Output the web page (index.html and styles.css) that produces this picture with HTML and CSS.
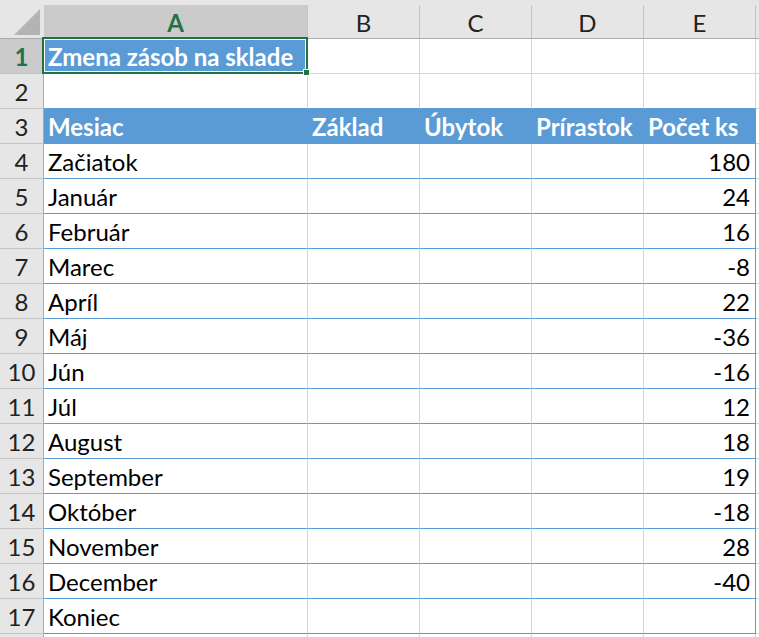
FILE: index.html
```html
<!DOCTYPE html>
<html lang="sk">
<head>
<meta charset="utf-8">
<title>Zmena zásob na sklade</title>
<link rel="stylesheet" href="styles.css">
</head>
<body>
<div class="sheet">
  <div class="corner">
    <svg width="44" height="39" viewBox="0 0 44 39"><polygon points="40,9 40,35 14,35" fill="#b3b3b3"/></svg>
  </div>
  <div class="band"></div>

  <div class="ch sel">A</div>
  <div class="ch">B</div>
  <div class="ch">C</div>
  <div class="ch">D</div>
  <div class="ch">E</div>
  <div class="ch end"></div>

  <!-- row 1 -->
  <div class="rh sel">1</div>
  <div class="c title">Zmena zásob na sklade</div>
  <div class="c"></div><div class="c"></div><div class="c"></div><div class="c"></div><div class="c end"></div>

  <!-- row 2 -->
  <div class="rh">2</div>
  <div class="c tb"></div><div class="c tb"></div><div class="c tb"></div><div class="c tb"></div><div class="c tb"></div><div class="c end"></div>

  <!-- row 3 -->
  <div class="rh">3</div>
  <div class="c th">Mesiac</div>
  <div class="c th">Základ</div>
  <div class="c th">Úbytok</div>
  <div class="c th">Prírastok</div>
  <div class="c th last">Počet ks</div>
  <div class="c end"></div>

  <div class="rh">4</div>
  <div class="c td">Začiatok</div><div class="c td"></div><div class="c td"></div><div class="c td"></div><div class="c td num last">180</div><div class="c end"></div>
  <div class="rh">5</div>
  <div class="c td">Január</div><div class="c td"></div><div class="c td"></div><div class="c td"></div><div class="c td num last">24</div><div class="c end"></div>
  <div class="rh">6</div>
  <div class="c td">Február</div><div class="c td"></div><div class="c td"></div><div class="c td"></div><div class="c td num last">16</div><div class="c end"></div>
  <div class="rh">7</div>
  <div class="c td">Marec</div><div class="c td"></div><div class="c td"></div><div class="c td"></div><div class="c td num last">-8</div><div class="c end"></div>
  <div class="rh">8</div>
  <div class="c td">Apríl</div><div class="c td"></div><div class="c td"></div><div class="c td"></div><div class="c td num last">22</div><div class="c end"></div>
  <div class="rh">9</div>
  <div class="c td">Máj</div><div class="c td"></div><div class="c td"></div><div class="c td"></div><div class="c td num last">-36</div><div class="c end"></div>
  <div class="rh">10</div>
  <div class="c td">Jún</div><div class="c td"></div><div class="c td"></div><div class="c td"></div><div class="c td num last">-16</div><div class="c end"></div>
  <div class="rh">11</div>
  <div class="c td">Júl</div><div class="c td"></div><div class="c td"></div><div class="c td"></div><div class="c td num last">12</div><div class="c end"></div>
  <div class="rh">12</div>
  <div class="c td">August</div><div class="c td"></div><div class="c td"></div><div class="c td"></div><div class="c td num last">18</div><div class="c end"></div>
  <div class="rh">13</div>
  <div class="c td">September</div><div class="c td"></div><div class="c td"></div><div class="c td"></div><div class="c td num last">19</div><div class="c end"></div>
  <div class="rh">14</div>
  <div class="c td">Október</div><div class="c td"></div><div class="c td"></div><div class="c td"></div><div class="c td num last">-18</div><div class="c end"></div>
  <div class="rh">15</div>
  <div class="c td">November</div><div class="c td"></div><div class="c td"></div><div class="c td"></div><div class="c td num last">28</div><div class="c end"></div>
  <div class="rh">16</div>
  <div class="c td">December</div><div class="c td"></div><div class="c td"></div><div class="c td"></div><div class="c td num last">-40</div><div class="c end"></div>
  <div class="rh">17</div>
  <div class="c td">Koniec</div><div class="c td"></div><div class="c td"></div><div class="c td"></div><div class="c td num last"></div><div class="c end"></div>

  <div class="rh"></div>
  <div class="c"></div><div class="c"></div><div class="c"></div><div class="c"></div><div class="c"></div><div class="c end"></div>

  <div class="selection"><span class="handle"></span></div>
</div>
</body>
</html>
```

FILE: styles.css
```css
* { box-sizing: border-box; }
html, body { margin: 0; padding: 0; background: #ffffff; overflow: hidden; }

.sheet {
  position: relative;
  display: grid;
  grid-template-columns: 44px 264px 112px 112px 112px 112px 3px;
  grid-template-rows: 5px 34px repeat(18, 35px);
  width: 759px;
  height: 637px;
  overflow: hidden;
  font-family: "Lato", "Liberation Sans", sans-serif;
  font-size: 24px;
  color: #000;
}

.corner {
  grid-row: 1 / span 2;
  grid-column: 1;
  background: #e6e6e6;
  border-bottom: 1px solid #ababab;
}
.corner svg { display: block; }

.band {
  grid-row: 1;
  grid-column: 2 / span 6;
  background: #e6e6e6;
}

.ch {
  background: #e6e6e6;
  border-right: 1px solid #c4c4c4;
  border-bottom: 1px solid #ababab;
  display: flex;
  align-items: center;
  justify-content: center;
  padding-top: 1px;
  color: #222;
}
.ch.end { border-right: 0; }
.ch.sel { background: #cbcbcb; color: #217346; font-weight: 700; }

.rh {
  background: #e6e6e6;
  border-right: 1px solid #ababab;
  border-bottom: 1px solid #c4c4c4;
  display: flex;
  align-items: center;
  justify-content: center;
  padding-top: 1px;
  color: #222;
}
.rh.sel { background: #cbcbcb; color: #217346; font-weight: 700; }

.c {
  border-right: 1px solid #d4d4d4;
  border-bottom: 1px solid #d4d4d4;
  display: flex;
  align-items: center;
  padding: 1px 5px 0 4px;
  white-space: nowrap;
}
.c.end { border-right: 0; }

.title {
  background: #5b9bd5;
  color: #fff;
  font-weight: 700;
}

.tb { border-bottom-color: #5b9bd5; }

.th {
  background: #5b9bd5;
  color: #fff;
  font-weight: 700;
  border-right-color: #5b9bd5;
  border-bottom-color: #5b9bd5;
}

.td { border-bottom-color: #5b9bd5; }
.last { border-right-color: #5b9bd5; }
.num { justify-content: flex-end; }

.selection {
  position: absolute;
  left: 42px;
  top: 37px;
  width: 266px;
  height: 37px;
  border: 2px solid #217346;
  box-shadow: inset 0 0 0 1px #ffffff;
}
.handle {
  position: absolute;
  right: -4px;
  bottom: -4px;
  width: 7px;
  height: 7px;
  background: #217346;
  border: 1px solid #ffffff;
}
```
